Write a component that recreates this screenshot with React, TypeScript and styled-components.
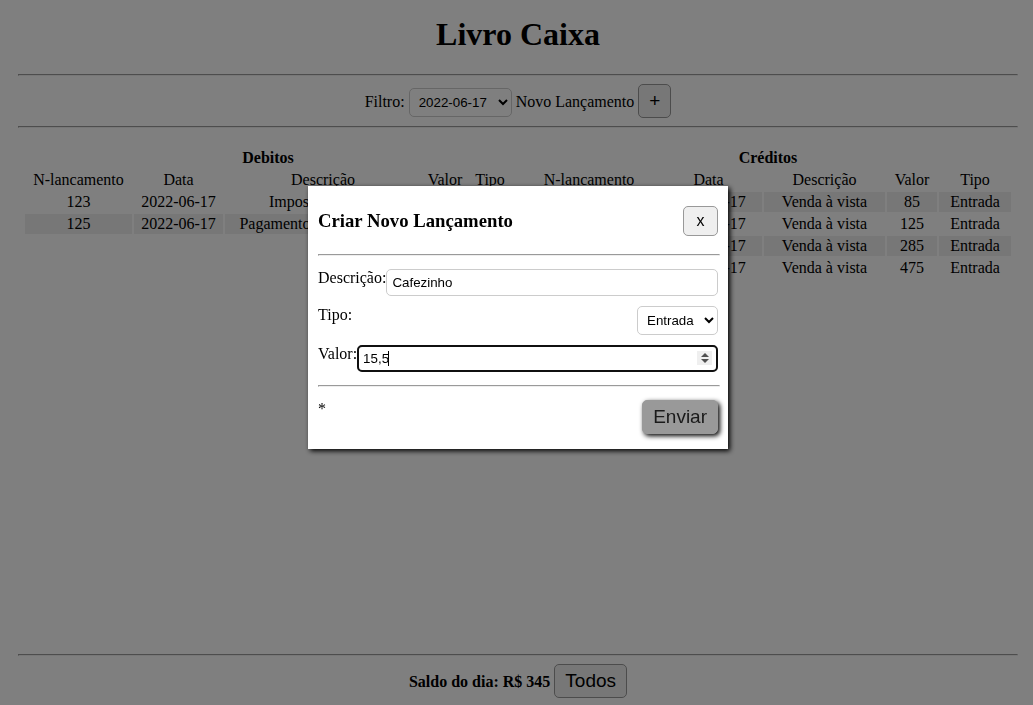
import React, { useState } from "react";
import styled, { createGlobalStyle } from "styled-components";

const GlobalStyle = createGlobalStyle`
  body {
    margin: 0;
    background: #fff;
    color: #000;
    font-family: "Liberation Serif", "Times New Roman", serif;
    font-size: 16px;
    line-height: 18px;
  }

  *, *::before, *::after {
    box-sizing: border-box;
  }
`;

const Page = styled.div`
  display: flex;
  flex-direction: column;
  min-height: 100vh;
  padding: 16px 15px 7px 18px;
`;

const Title = styled.h1`
  margin: 0 0 21px;
  font-size: 32px;
  line-height: 37px;
  text-align: center;
`;

const Divider = styled.hr`
  width: 100%;
  margin: 0;
`;

const Toolbar = styled.div`
  display: flex;
  align-items: baseline;
  justify-content: center;
  gap: 4px;
  padding: 8px 0;
`;

const Select = styled.select`
  height: 29px;
  padding: 5px 7px 5px 5px;
  border: 1px solid #ccc;
  border-radius: 5px;
  background: #fff;
  color: #000;
  font-family: "Liberation Sans", Arial, sans-serif;
`;

const Button = styled.button`
  padding: 5px 10px;
  border: 1px solid #999;
  border-radius: 5px;
  background: #efefef;
  color: #000;
  font-family: "Liberation Sans", Arial, sans-serif;
  font-size: 19px;
  line-height: 22px;
`;

const CloseButton = styled(Button)`
  width: 35px;
  height: 30px;
  padding: 0;
  font-size: 16px;
`;

const SubmitButton = styled(Button)`
  background: #999;
  color: #1a1a1a;
  box-shadow: 2px 2px 5px #000;
`;

const Ledgers = styled.main`
  display: flex;
  flex: 1;
  align-items: flex-start;
  gap: 10px;
  padding: 18px 5px;
`;

const Table = styled.table<{ $stripe: "odd" | "even" }>`
  flex: 1;
  width: 100%;
  min-width: 0;
  table-layout: fixed;
  border-spacing: 2px;
  text-align: center;

  th,
  td {
    padding: 1px;
    white-space: nowrap;
  }

  tbody tr:nth-child(${(p) => p.$stripe}) td {
    background: #eee;
  }
`;

const ColumnName = styled.th`
  font-weight: normal;
`;

const Col = styled.col<{ $width: number }>`
  width: ${(p) => p.$width}px;
`;

const Footer = styled.footer`
  display: flex;
  align-items: baseline;
  justify-content: center;
  gap: 4px;
  padding-top: 8px;
  font-weight: bold;
`;

const Overlay = styled.div`
  position: fixed;
  inset: 0;
  display: flex;
  align-items: flex-start;
  justify-content: center;
  padding: 186px 15px 0 18px;
  background: rgba(0, 0, 0, 0.5);
`;

const Modal = styled.form`
  width: 420px;
  padding: 20px 10px 15px;
  background: #fff;
  box-shadow: 2px 2px 5px #000;
`;

const ModalHeader = styled.div`
  display: flex;
  align-items: center;
  justify-content: space-between;
  padding-bottom: 18px;
`;

const ModalTitle = styled.h3`
  margin: 0;
  line-height: 22px;
`;

const ModalDivider = styled(Divider)`
  box-sizing: content-box;
`;

const Fields = styled.div`
  display: flex;
  flex-direction: column;
  gap: 10px;
  padding: 13px 0;
`;

const Field = styled.div`
  display: flex;
  align-items: flex-start;
  justify-content: space-between;
`;

const Input = styled.input`
  flex: 1;
  min-width: 0;
  height: 27px;
  padding: 5px;
  border: 1px solid #ccc;
  border-radius: 5px;
  background: #fff;
  color: #000;
  font-family: "Liberation Sans", Arial, sans-serif;

  &:focus {
    outline: 2px solid #101010;
    outline-offset: -2px;
  }
`;

const AmountBox = styled.div`
  position: relative;
  display: flex;
  flex: 1;
`;

const AmountInput = styled(Input)`
  padding-right: 24px;
  caret-color: transparent;
`;

const Caret = styled.span`
  position: absolute;
  top: 6px;
  left: 31px;
  width: 1px;
  height: 15px;
  background: #000;
`;

const Stepper = styled.div`
  position: absolute;
  top: 6px;
  right: 6px;
  display: flex;
  flex-direction: column;
  width: 15px;
  background: #efefef;
`;

const StepButton = styled.button`
  display: flex;
  justify-content: center;
  height: 7px;
  padding: 1px 0;
  border: 0;
  background: transparent;
`;

const ModalFooter = styled.div`
  display: flex;
  align-items: flex-start;
  justify-content: space-between;
  padding-top: 13px;
`;

type Entry = [number, string, string, number, string];

const debits: Entry[] = [
  [123, "2022-06-17", "Imposto Simples", 150, "Saida"],
  [125, "2022-06-17", "Pagamento de Fornecedor", 475, "Saida"],
];

const credits: Entry[] = [
  [122, "2022-06-17", "Venda à vista", 85, "Entrada"],
  [124, "2022-06-17", "Venda à vista", 125, "Entrada"],
  [126, "2022-06-17", "Venda à vista", 285, "Entrada"],
  [127, "2022-06-17", "Venda à vista", 475, "Entrada"],
];

const columns = ["N-lancamento", "Data", "Descrição", "Valor", "Tipo"];

interface LedgerProps {
  title: string;
  entries: Entry[];
  widths: number[];
  stripe: "odd" | "even";
}

function Ledger({ title, entries, widths, stripe }: LedgerProps) {
  return (
    <Table $stripe={stripe}>
      <colgroup>
        {widths.map((w, i) => (
          <Col key={i} $width={w} />
        ))}
      </colgroup>
      <thead>
        <tr>
          <th colSpan={5}>{title}</th>
        </tr>
        <tr>
          {columns.map((c) => (
            <ColumnName key={c} scope="col">
              {c}
            </ColumnName>
          ))}
        </tr>
      </thead>
      <tbody>
        {entries.map((entry) => (
          <tr key={entry[0]}>
            {entry.map((value, i) => (
              <td key={i}>{value}</td>
            ))}
          </tr>
        ))}
      </tbody>
    </Table>
  );
}

function shift(amount: string, by: number) {
  const n = parseFloat(amount.replace(",", ".")) || 0;
  return String(n + by).replace(".", ",");
}

export default function App() {
  const [description, setDescription] = useState("Cafezinho");
  const [amount, setAmount] = useState("15,5");

  return (
    <>
      <GlobalStyle />
      <Page lang="pt-BR">
        <Title>Livro Caixa</Title>
        <Divider />
        <Toolbar>
          <label htmlFor="filtro">Filtro:</label>
          <Select id="filtro">
            <option>2022-06-17</option>
          </Select>
          <span id="novo">Novo Lançamento</span>
          <Button type="button" aria-labelledby="novo">
            +
          </Button>
        </Toolbar>
        <Divider />
        <Ledgers>
          <Ledger title="Debitos" entries={debits} widths={[107, 89, 196, 44, 42]} stripe="even" />
          <Ledger title="Créditos" entries={credits} widths={[128, 107, 121, 50, 72]} stripe="odd" />
        </Ledgers>
        <Divider />
        <Footer>
          <span>Saldo do dia: R$ 345</span>
          <Button type="button">Todos</Button>
        </Footer>
      </Page>
      <Overlay lang="pt-BR">
        <Modal role="dialog" aria-labelledby="modal-title" onSubmit={(e) => e.preventDefault()}>
          <ModalHeader>
            <ModalTitle id="modal-title">Criar Novo Lançamento</ModalTitle>
            <CloseButton type="button" aria-label="Fechar">
              x
            </CloseButton>
          </ModalHeader>
          <ModalDivider />
          <Fields>
            <Field>
              <label htmlFor="descricao">Descrição:</label>
              <Input id="descricao" value={description} onChange={(e) => setDescription(e.target.value)} />
            </Field>
            <Field>
              <label htmlFor="tipo">Tipo:</label>
              <Select id="tipo">
                <option>Entrada</option>
                <option>Saida</option>
              </Select>
            </Field>
            <Field>
              <label htmlFor="valor">Valor:</label>
              <AmountBox>
                <AmountInput
                  id="valor"
                  inputMode="decimal"
                  autoFocus
                  value={amount}
                  onChange={(e) => setAmount(e.target.value)}
                />
                <Caret />
                <Stepper>
                  <StepButton type="button" aria-label="Aumentar" onClick={() => setAmount(shift(amount, 1))}>
                    <svg width="8" height="5" viewBox="0 0 8 5">
                      <path d="M0 5L4 1L8 5Z" fill="#505050" />
                    </svg>
                  </StepButton>
                  <StepButton type="button" aria-label="Diminuir" onClick={() => setAmount(shift(amount, -1))}>
                    <svg width="8" height="5" viewBox="0 0 8 5">
                      <path d="M0 0L4 4L8 0Z" fill="#505050" />
                    </svg>
                  </StepButton>
                </Stepper>
              </AmountBox>
            </Field>
          </Fields>
          <ModalDivider />
          <ModalFooter>
            <span>*</span>
            <SubmitButton type="submit">Enviar</SubmitButton>
          </ModalFooter>
        </Modal>
      </Overlay>
    </>
  );
}
